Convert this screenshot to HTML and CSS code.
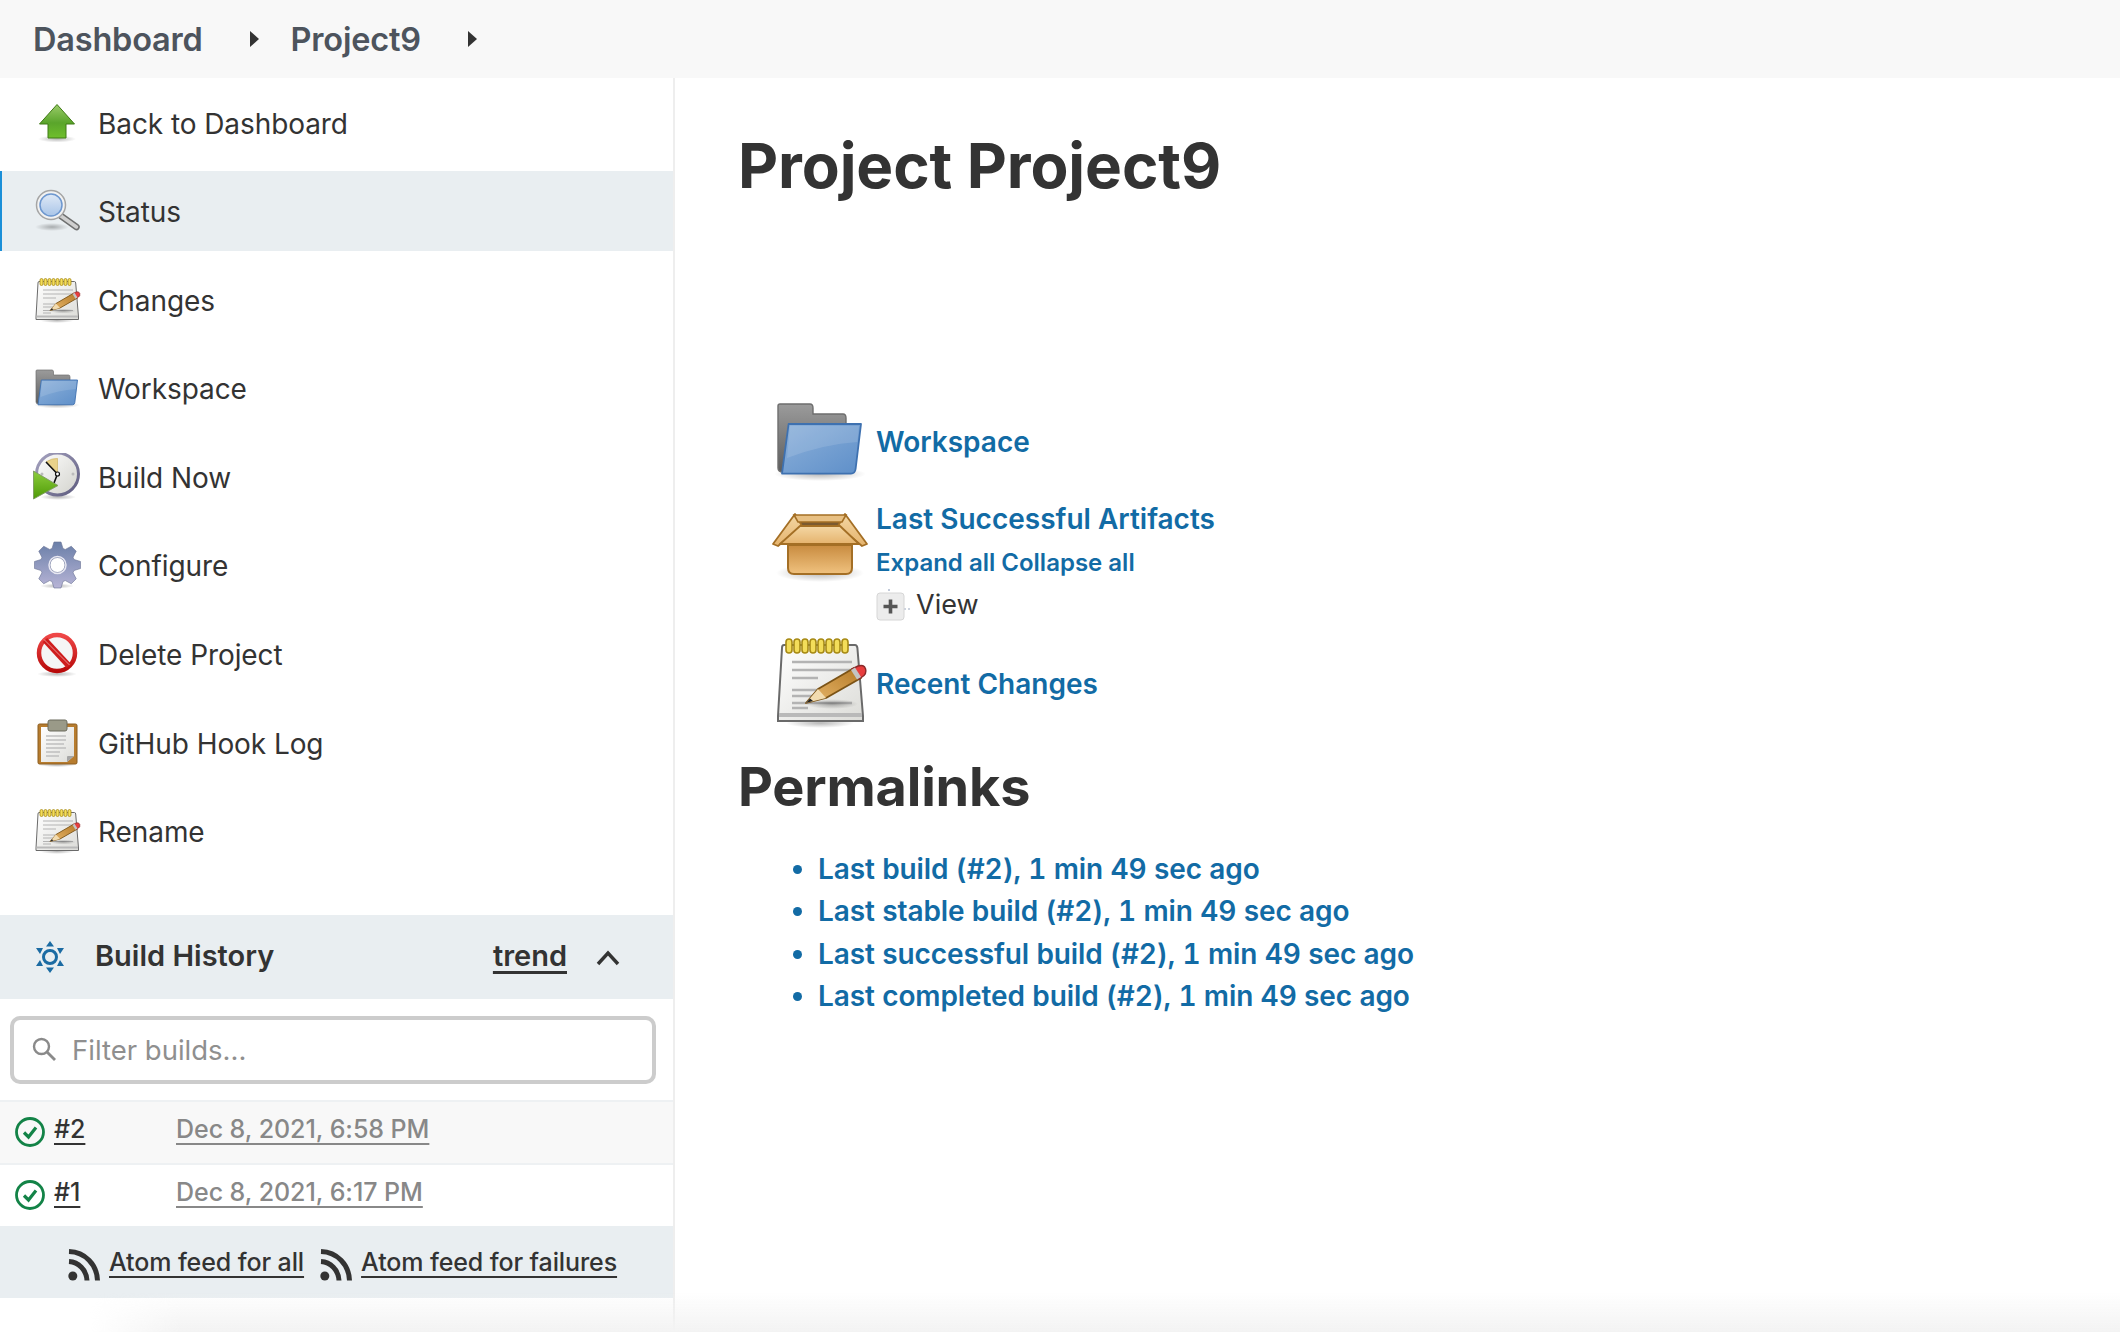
FILE: index.html
```html
<!DOCTYPE html>
<html lang="en">
<head>
<meta charset="utf-8">
<title>Project9</title>
<link rel="stylesheet" href="styles.css">
</head>
<body>
<svg class="defs" width="0" height="0" aria-hidden="true">
  <defs>
    <linearGradient id="gArrow" x1="0" y1="0" x2="0" y2="1"><stop offset="0" stop-color="#9acb6a"/><stop offset=".55" stop-color="#5aa52b"/><stop offset="1" stop-color="#6fbf2c"/></linearGradient>
    <linearGradient id="gGlass" x1="0" y1="0" x2="0" y2="1"><stop offset="0" stop-color="#dfe9f6"/><stop offset="1" stop-color="#a9c5e8"/></linearGradient>
    <linearGradient id="gPaper" x1="0" y1="0" x2="1" y2="1"><stop offset="0" stop-color="#ffffff"/><stop offset="1" stop-color="#dcdcd8"/></linearGradient>
    <linearGradient id="gPencil" x1="0" y1="1" x2="1" y2="0"><stop offset="0" stop-color="#e9b96e"/><stop offset="1" stop-color="#b57a26"/></linearGradient>
    <linearGradient id="gFolderBack" x1="0" y1="0" x2="0" y2="1"><stop offset="0" stop-color="#9b9b9b"/><stop offset="1" stop-color="#5d5d5d"/></linearGradient>
    <linearGradient id="gFolderFront" x1="0" y1="0" x2="1" y2="1"><stop offset="0" stop-color="#8db1da"/><stop offset="1" stop-color="#5e8fc9"/></linearGradient>
    <linearGradient id="gBox" x1="0" y1="0" x2="0" y2="1"><stop offset="0" stop-color="#c88b3f"/><stop offset="1" stop-color="#f0c27f"/></linearGradient>
    <linearGradient id="gFlap" x1="0" y1="0" x2="0" y2="1"><stop offset="0" stop-color="#f4d7a4"/><stop offset="1" stop-color="#e5b36d"/></linearGradient>
    <linearGradient id="gGear" x1="0" y1="0" x2="0" y2="1"><stop offset="0" stop-color="#6a7fa8"/><stop offset="1" stop-color="#b7b4d6"/></linearGradient>
    <linearGradient id="gClock" x1="0" y1="0" x2="1" y2="1"><stop offset="0" stop-color="#a6a3c0"/><stop offset="1" stop-color="#5d5b7e"/></linearGradient>
    <linearGradient id="gFace" x1="0" y1="0" x2="1" y2="1"><stop offset="0" stop-color="#ffffff"/><stop offset="1" stop-color="#d2d2cc"/></linearGradient>
    <linearGradient id="gPlay" x1="0" y1="0" x2="0" y2="1"><stop offset="0" stop-color="#8ccd3c"/><stop offset="1" stop-color="#4e9a06"/></linearGradient>
    <linearGradient id="gBan" x1="0" y1="0" x2="0" y2="1"><stop offset="0" stop-color="#ef4747"/><stop offset="1" stop-color="#b80a0a"/></linearGradient>
    <radialGradient id="gShadow"><stop offset="0" stop-color="#000" stop-opacity=".28"/><stop offset="1" stop-color="#000" stop-opacity="0"/></radialGradient>

    <symbol id="i-up" viewBox="0 0 48 48">
      <ellipse cx="24" cy="40" rx="19" ry="3.5" fill="url(#gShadow)"/>
      <path d="M24 5.500 41.500 25H33V39H15V25H6.500Z" fill="url(#gArrow)" stroke="#3f7a14" stroke-width="1" stroke-linejoin="round"/>
    </symbol>

    <symbol id="i-search" viewBox="0 0 48 48">
      <ellipse cx="19" cy="40" rx="17" ry="4" fill="url(#gShadow)"/>
      <path d="M28 29 43.500 40" stroke="#6f7070" stroke-width="6.500" stroke-linecap="round"/>
      <path d="M28 29 43.500 40" stroke="#cfcfcf" stroke-width="3.500" stroke-linecap="round"/>
      <circle cx="18" cy="18" r="14.500" fill="#f2f2f2" stroke="#a5a5a5" stroke-width="1.500"/>
      <circle cx="18" cy="18" r="11" fill="url(#gGlass)" stroke="#6d97cf" stroke-width="1.500"/>
    </symbol>

    <symbol id="i-notepad" viewBox="0 0 48 48">
      <ellipse cx="24" cy="44.500" rx="17" ry="2.500" fill="url(#gShadow)"/>
      <path d="M6 5.500H41.500Q42.500 5.500 42.700 7L45.500 41V43.500H3V41L5 7Q5 5.500 6 5.500Z" fill="url(#gPaper)" stroke="#6a6a6a"/>
      <rect x="3.500" y="39.500" width="41.500" height="2" fill="#b9b9b9"/>
      <g fill="#f3dd5a" stroke="#a78a15" stroke-width=".8">
        <rect x="7" y="2.500" width="3" height="7" rx="1.500"/><rect x="11" y="2.500" width="3" height="7" rx="1.500"/><rect x="15" y="2.500" width="3" height="7" rx="1.500"/><rect x="19" y="2.500" width="3" height="7" rx="1.500"/><rect x="23" y="2.500" width="3" height="7" rx="1.500"/><rect x="27" y="2.500" width="3" height="7" rx="1.500"/><rect x="31" y="2.500" width="3" height="7" rx="1.500"/><rect x="35" y="2.500" width="3" height="7" rx="1.500"/>
      </g>
      <path d="M10 14H40M10 18H40M10 22H23M10 28H28M10 31H22M10 34.500H40M10 37H18" stroke="#b3b3b3" stroke-width="1.200" fill="none"/>
      <ellipse cx="30" cy="35" rx="13" ry="2.500" fill="url(#gShadow)"/>
      <path d="M17 34.500 23 27.500 41 17 44.500 22 27 32Z" fill="url(#gPencil)" stroke="#7b5316" stroke-width=".9" stroke-linejoin="round"/>
      <path d="M40 17.500 43 16Q46 15 46.800 17.500 47.500 20 45 21.500L43.500 22.500Z" fill="#e83e3e" stroke="#8a2a2a" stroke-width=".7"/>
      <path d="M39.500 18 42.500 22.800 44.500 21.500 41.500 16.800Z" fill="#c4c4c4"/>
      <path d="M17 34.500 23 27.500 27 32Z" fill="#f2dcb0"/>
      <path d="M17 34.500 19 32.200 20.500 33.500Z" fill="#222"/>
    </symbol>

    <symbol id="i-folder" viewBox="0 0 48 48">
      <ellipse cx="24" cy="41" rx="23" ry="3.500" fill="url(#gShadow)"/>
      <path d="M4 6H19Q20.500 6 20.500 8V11H35.500Q37 11 37 13V40H5.500Q3 40 3 38V7Q3 6 4 6Z" fill="url(#gFolderBack)" stroke="#6e6e6e" stroke-width=".7"/>
      <path d="M8.300 16H44.500L41.800 38.500Q41.500 40.800 39.500 40.800H5Z" fill="url(#gFolderFront)" stroke="#3e71b0" stroke-width=".9" stroke-linejoin="round"/>
      <path d="M9 17H43.500L42.700 25Q26 26 7.500 33Z" fill="#fff" fill-opacity=".12"/>
    </symbol>

    <symbol id="i-clock" viewBox="0 0 48 48">
      <ellipse cx="25" cy="44" rx="18" ry="3" fill="url(#gShadow)"/>
      <circle cx="24.500" cy="21" r="21" fill="url(#gFace)" stroke="url(#gClock)" stroke-width="3"/>
      <path d="M24.500 21 13 9Q19 5 24.500 5.500Z" fill="#e9d28a" stroke="#c9ac55" stroke-width=".6"/>
      <path d="M24.500 21 13 9M24.500 21 21 30" stroke="#111" stroke-width="1.600" fill="none"/>
      <circle cx="24.500" cy="21" r="2" fill="#fff" stroke="#111" stroke-width="1.200"/>
      <circle cx="40" cy="21" r="1.500" fill="#bbb"/><circle cx="9" cy="21" r="1.500" fill="#bbb"/>
      <path d="M.5 18 25 32.500.5 46Z" fill="url(#gPlay)" stroke="#7d9a62" stroke-width=".9"/>
    </symbol>

    <symbol id="i-gear" viewBox="0 0 48 48">
      <ellipse cx="24" cy="45" rx="17" ry="2.500" fill="url(#gShadow)"/>
      <path transform="translate(24.500 24)" fill-rule="evenodd" fill="url(#gGear)" stroke="#6a7293" stroke-width=".6" d="M-5.500-16.500-3.500-23H3.500L5.500-16.500 7.780-15.560 13.790-18.740 18.740-13.790 15.560-7.780 16.500-5.500 23-3.500V3.500L16.500 5.500 15.560 7.780 18.740 13.790 13.790 18.740 7.780 15.560 5.500 16.500 3.500 23H-3.500L-5.500 16.500-7.780 15.560-13.790 18.740-18.740 13.790-15.560 7.780-16.500 5.500-23 3.500V-3.500L-16.500-5.500-15.560-7.780-18.740-13.790-13.790-18.740-7.780-15.560ZM0-7.500A7.500 7.500 0 1 0 0 7.500 7.500 7.500 0 1 0 0-7.500Z"/>
      <circle cx="24.500" cy="24" r="8.500" fill="none" stroke="#e8e8f2" stroke-width="1.500"/>
    </symbol>

    <symbol id="i-ban" viewBox="0 0 48 48">
      <ellipse cx="24" cy="44" rx="20" ry="3" fill="url(#gShadow)"/>
      <circle cx="24" cy="23" r="18" fill="#f5f5f5" stroke="url(#gBan)" stroke-width="4.500"/>
      <path d="M12 10 36 36" stroke="#cf1d1d" stroke-width="6"/>
      <path d="M11 9.500 36.500 35" stroke="#fff" stroke-opacity=".5" stroke-width="1"/>
    </symbol>

    <symbol id="i-clip" viewBox="0 0 48 48">
      <ellipse cx="24" cy="46" rx="19" ry="2" fill="url(#gShadow)"/>
      <rect x="5" y="5" width="39" height="40" rx="1.500" fill="#b77c2e" stroke="#8a5c20"/>
      <path d="M8 8H41V37L34 43H8Z" fill="url(#gPaper)"/>
      <path d="M34 43 41 37H35Q34 37 34 38Z" fill="#a5a5a5"/>
      <rect x="15" y="1" width="19" height="11" rx="2" fill="#9a9a88" stroke="#6b6b5c"/>
      <path d="M13 17H33M13 21H33M13 25H31M13 29H33M13 33H27M13 37H26" stroke="#bfbfbf" stroke-width="1.400"/>
    </symbol>

    <symbol id="i-box" viewBox="0 0 48 48">
      <ellipse cx="24" cy="38.500" rx="22" ry="4.500" fill="url(#gShadow)"/>
      <path d="M11 10H37L40 22H8Z" fill="#a5712a"/>
      <path d="M14 13H34L36 22H12Z" fill="#7b5a30"/>
      <ellipse cx="19.500" cy="18" rx="4" ry="3.500" fill="#e9e6df"/>
      <ellipse cx="27" cy="18" rx="4.500" ry="3.500" fill="#f6f4ef"/>
      <path d="M11.500 9 15 15 3 25 .5 24Z" fill="url(#gFlap)" stroke="#a46f25" stroke-width=".9" stroke-linejoin="round"/>
      <path d="M36.500 9 33 15 45 25 47.500 24Z" fill="url(#gFlap)" stroke="#a46f25" stroke-width=".9" stroke-linejoin="round"/>
      <path d="M11 9.500H37L35 13H13Z" fill="#e8c083" stroke="#a46f25" stroke-width=".8"/>
      <path d="M14 15H34L43.500 24H4Z" fill="url(#gFlap)" stroke="#a46f25" stroke-width=".9" stroke-linejoin="round"/>
      <path d="M8 24.500H40V36Q40 39 37 39H11Q8 39 8 36Z" fill="url(#gBox)" stroke="#a46f25" stroke-width="1"/>
    </symbol>

    <symbol id="i-rss" viewBox="0 0 32 32">
      <circle cx="4.800" cy="27" r="4.500" fill="currentColor"/>
      <path d="M1 12.500C10.500 13 18.500 21 19 31.500" fill="none" stroke="currentColor" stroke-width="5"/>
      <path d="M1 2.500C17 3 29 15.500 29.500 31.500" fill="none" stroke="currentColor" stroke-width="5"/>
    </symbol>

    <symbol id="i-ok" viewBox="0 0 30 30">
      <circle cx="15" cy="15" r="13.500" fill="none" stroke="#138347" stroke-width="2.800"/>
      <path d="M9 15.500 13.500 20 21 10.500" fill="none" stroke="#138347" stroke-width="3.200"/>
    </symbol>
  </defs>
</svg>

<header class="topbar">
  <a class="crumb" href="#">Dashboard</a>
  <span class="crumb-arrow"></span>
  <a class="crumb" href="#">Project9</a>
  <span class="crumb-arrow"></span>
</header>

<div class="layout">
  <aside class="side">
    <nav class="tasks">
      <a class="task" href="#"><svg class="task-icon"><use href="#i-up"/></svg>Back to Dashboard</a>
      <a class="task is-active" href="#"><svg class="task-icon"><use href="#i-search"/></svg>Status</a>
      <a class="task" href="#"><svg class="task-icon"><use href="#i-notepad"/></svg>Changes</a>
      <a class="task" href="#"><svg class="task-icon"><use href="#i-folder"/></svg>Workspace</a>
      <a class="task" href="#"><svg class="task-icon"><use href="#i-clock"/></svg>Build Now</a>
      <a class="task" href="#"><svg class="task-icon"><use href="#i-gear"/></svg>Configure</a>
      <a class="task" href="#"><svg class="task-icon"><use href="#i-ban"/></svg>Delete Project</a>
      <a class="task" href="#"><svg class="task-icon"><use href="#i-clip"/></svg>GitHub Hook Log</a>
      <a class="task" href="#"><svg class="task-icon"><use href="#i-notepad"/></svg>Rename</a>
    </nav>

    <section class="history">
      <div class="history-head">
        <svg class="history-icon" viewBox="0 0 28 32">
          <circle cx="14" cy="16" r="6.500" fill="none" stroke="#1b6ba3" stroke-width="3"/>
          <path d="M14 0 18 5.500H10ZM14 32 10 26.500H18ZM0 7H7L4 13ZM28 7H21L24 13ZM0 25 4 19 7 25ZM28 25 24 19 21 25Z" fill="#1b6ba3"/>
        </svg>
        <span class="history-title">Build History</span>
        <a class="trend" href="#">trend</a>
        <svg class="chevron" viewBox="0 0 24 16"><path d="M2 14 12 3 22 14" fill="none" stroke="#333" stroke-width="3.400"/></svg>
      </div>
      <div class="filter">
        <svg class="filter-icon" viewBox="0 0 24 24"><circle cx="9.500" cy="9.500" r="7.500" fill="none" stroke="#8a8a8a" stroke-width="2.400"/><path d="M15 15 23 23" stroke="#8a8a8a" stroke-width="2.800"/></svg>
        <span class="filter-text">Filter builds...</span>
      </div>
      <div class="build is-odd">
        <svg class="ok"><use href="#i-ok"/></svg>
        <a class="build-no" href="#">#2</a>
        <a class="build-date" href="#">Dec 8, 2021, 6:58 PM</a>
      </div>
      <div class="build">
        <svg class="ok"><use href="#i-ok"/></svg>
        <a class="build-no" href="#">#1</a>
        <a class="build-date" href="#">Dec 8, 2021, 6:17 PM</a>
      </div>
      <div class="feeds">
        <svg class="rss"><use href="#i-rss"/></svg><a class="feed" href="#">Atom feed for all</a>
        <svg class="rss rss-second"><use href="#i-rss"/></svg><a class="feed" href="#">Atom feed for failures</a>
      </div>
    </section>
  </aside>

  <main class="content">
    <h1 class="title">Project Project9</h1>
    <div class="links">
      <div class="link-row">
        <svg class="big-icon"><use href="#i-folder"/></svg>
        <a class="big-link big-link-shift" href="#">Workspace</a>
      </div>
      <div class="link-row artifacts">
        <svg class="big-icon"><use href="#i-box"/></svg>
        <div class="artifact-body">
          <a class="big-link" href="#">Last Successful Artifacts</a>
          <div class="expand"><a href="#">Expand all</a> <a href="#">Collapse all</a></div>
          <div class="tree">
            <svg class="plus" viewBox="0 0 34 32">
              <path d="M13 0V3M28 20H34" stroke="#9aa7c0" stroke-width="1.200" stroke-dasharray="2 2"/>
              <rect x="1" y="4" width="27" height="27" rx="3" fill="#ececec" stroke="#d6d6d6"/>
              <path d="M14.500 10.500V24.500M7.500 17.500H21.500" stroke="#555" stroke-width="3.600"/>
            </svg>
            <span>View</span>
          </div>
        </div>
      </div>
      <div class="link-row recent">
        <svg class="big-icon"><use href="#i-notepad"/></svg>
        <a class="big-link big-link-shift" href="#">Recent Changes</a>
      </div>
    </div>
    <h2 class="sub">Permalinks</h2>
    <ul class="perma">
      <li><a href="#">Last build (#2), 1 min 49 sec ago</a></li>
      <li><a href="#">Last stable build (#2), 1 min 49 sec ago</a></li>
      <li><a href="#">Last successful build (#2), 1 min 49 sec ago</a></li>
      <li><a href="#">Last completed build (#2), 1 min 49 sec ago</a></li>
    </ul>
  </main>
</div>
<div class="page-fade"></div>
</body>
</html>
```

FILE: styles.css
```css
* { box-sizing: border-box; }
html, body { margin: 0; height: 100%; }
body {
  position: relative;
  display: flex;
  flex-direction: column;
  height: 1332px;
  overflow: hidden;
  background: #fff;
  color: #333;
  font-family: Inter, "Liberation Sans", sans-serif;
}
a { color: inherit; text-decoration: none; }
.defs { position: absolute; }

.topbar {
  flex: none;
  display: flex;
  align-items: center;
  height: 78px;
  padding-left: 33px;
  background: #f8f8f8;
}
.crumb { font-size: 32.500px; font-weight: 600; color: #4d545d; letter-spacing: -.2px; }
.crumb-arrow {
  width: 0;
  height: 0;
  margin: 0 32px 0 47px;
  border-left: 9px solid #333;
  border-top: 8.500px solid transparent;
  border-bottom: 8.500px solid transparent;
}

.layout { flex: 1; display: flex; min-height: 0; }
.side {
  flex: none;
  width: 675px;
  border-right: 2px solid #eeeeee;
  padding-top: 4.500px;
}
.tasks { display: flex; flex-direction: column; gap: 8.600px; }
.task {
  display: flex;
  align-items: center;
  gap: 17px;
  height: 80px;
  padding: 2px 0 0 33px;
  font-size: 28px;
  letter-spacing: -.08px;
  color: #333;
}
.task.is-active { background: #e9eef1; border-left: 2px solid #1b8fd8; padding-left: 31px; }
.task-icon { flex: none; width: 48px; height: 48px; margin-top: -2px; }

.history { margin-top: 43.700px; }
.history-head {
  display: flex;
  align-items: center;
  height: 84px;
  padding-left: 36px;
  background: #e9eef1;
}
.history-icon { flex: none; width: 28px; height: 32px; }
.history-title { margin: 0 0 3px 31px; font-size: 29px; font-weight: 600; color: #333; }
.trend {
  margin: 0 0 3px auto;
  font-size: 29px;
  font-weight: 600;
  text-decoration: underline;
  text-decoration-thickness: 3px;
  text-underline-offset: 5px;
}
.chevron { flex: none; width: 24px; height: 16px; margin: 3px 53px 0 29px; }
.filter {
  display: flex;
  align-items: center;
  height: 68px;
  margin: 17px 17px 16px 10px;
  padding-left: 18px;
  border: 4px solid #cccccc;
  border-radius: 10px;
  background: #fff;
}
.filter-icon { flex: none; width: 24px; height: 24px; margin-bottom: 2px; }
.filter-text { margin-left: 16px; font-size: 27.500px; color: #8f8f8f; }
.build {
  display: flex;
  height: 63px;
  padding: 12px 0 0 15px;
  border-top: 2px solid #eef1f3;
  font-size: 25px;
  font-weight: 500;
}
.build.is-odd { background: #f8f8f8; }
.ok { flex: none; width: 30px; height: 30px; margin-top: 3px; }
.build-no {
  width: 122px;
  margin-left: 9px;
  font-weight: 500;
}
.build-no, .build-date, .feed {
  text-decoration: underline;
  text-decoration-thickness: 2px;
  text-underline-offset: 5px;
}
.build-date { color: #888; letter-spacing: -.05px; }
.feeds {
  display: flex;
  align-items: center;
  height: 72px;
  padding-left: 68px;
  background: #e9eef1;
  font-size: 25px;
  font-weight: 500;
  letter-spacing: -.1px;
  color: #333;
}
.rss { flex: none; width: 32px; height: 32px; color: #333; margin-top: 6px; }
.rss-second { margin-left: 16px; }
.feed { margin-left: 9px; }

.content { flex: 1; min-width: 0; padding: 54px 0 0 63px; }
.title { margin: 0; font-size: 62px; line-height: 68px; font-weight: 700; color: #333; letter-spacing: -.1px; }
.links { margin-top: 192px; }
.link-row { display: flex; align-items: center; margin-left: 34px; }
.big-icon { flex: none; width: 96px; height: 96px; margin-right: 8px; }
.big-link { font-size: 28px; font-weight: 600; color: #126ba5; }
.big-link-shift { margin-top: 3px; }
.artifacts { align-items: flex-start; margin-top: 8px; }
.artifact-body { display: flex; flex-direction: column; margin-top: 6px; }
.expand { margin-top: 12px; font-size: 24px; font-weight: 600; color: #126ba5; }
.tree { display: flex; align-items: center; gap: 6px; font-size: 27px; color: #333; margin-top: 11px; }
.plus { flex: none; width: 34px; height: 32px; }
.recent { margin-top: 13px; }
.sub { margin: 27px 0 0; font-size: 54px; line-height: 60px; font-weight: 700; color: #333; letter-spacing: -.2px; }
.perma { list-style: disc; margin: 30.500px 0 0; padding: 0 0 0 80px; font-size: 28px; font-weight: 600; color: #126ba5; font-variant-numeric: tabular-nums; letter-spacing: -.1px; }
.perma li { height: 42.500px; line-height: 42.500px; }

.page-fade {
  position: absolute;
  left: 0;
  right: 0;
  bottom: 0;
  height: 40px;
  background: linear-gradient(#ffffff00, #f3f3f3);
  -webkit-mask-image: linear-gradient(90deg, transparent 90px, #000 180px);
  mask-image: linear-gradient(90deg, transparent 90px, #000 180px);
  pointer-events: none;
}
```
